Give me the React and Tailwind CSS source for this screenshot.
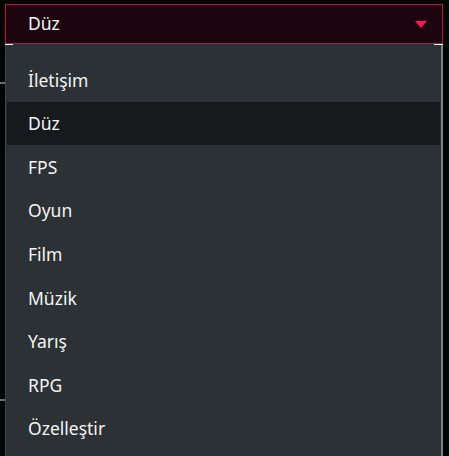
import React, { useState } from "react";

const options = ["İletişim", "Düz", "FPS", "Oyun", "Film", "Müzik", "Yarış", "RPG", "Özelleştir"];

const App = () => {
  const [selected, setSelected] = useState("Düz");

  return (
    <div className="relative w-[449px] h-[456px] overflow-hidden bg-[#020506] font-['Noto_Sans',sans-serif] text-[17.5px] text-[#f4f4f4]">
      {/* bits of the page behind the menu */}
      <div className="absolute left-0 top-[82px] w-[6px] h-[2px] bg-[#6e6e6e]" />
      <div className="absolute left-0 top-[399px] w-[6px] h-[2px] bg-[#6e6e6e]" />

      <div className="relative pt-[4px] px-[5px] w-[448px]">
        {/* selected value */}
        <div className="h-[40px] flex items-center justify-between pl-[22px] pr-[15px] bg-[#1d050f] border border-[#c40d3b] border-b-[#8c2a48]">
          <span className="leading-none">{selected}</span>
          <svg width="12" height="8" viewBox="0 0 12 8" className="mt-[1px]">
            <path d="M0 0 H12 L6 7 Z" fill="#ff1457" />
          </svg>
        </div>

        {/* list */}
        <div className="relative h-[420px] bg-[#2b3134] border-l border-l-[#3d4447] border-r-2 border-r-[#7d8183] pt-[13px] pl-[1px] pr-[1px] border-t border-t-[#2b3134]">
          <div className="absolute left-[-1px] top-[-1px] w-[8px] h-[1px] bg-white" />
          <div className="absolute right-[-2px] top-[-1px] w-[9px] h-[1px] bg-white" />
          {options.map((o) => (
            <div
              key={o}
              onClick={() => setSelected(o)}
              className={`h-[43.6px] flex items-center pl-[21px] ${
                o === selected ? "bg-[#171a1c]" : ""
              }`}
            >
              {o}
            </div>
          ))}
        </div>
      </div>
    </div>
  );
};

export default App;
